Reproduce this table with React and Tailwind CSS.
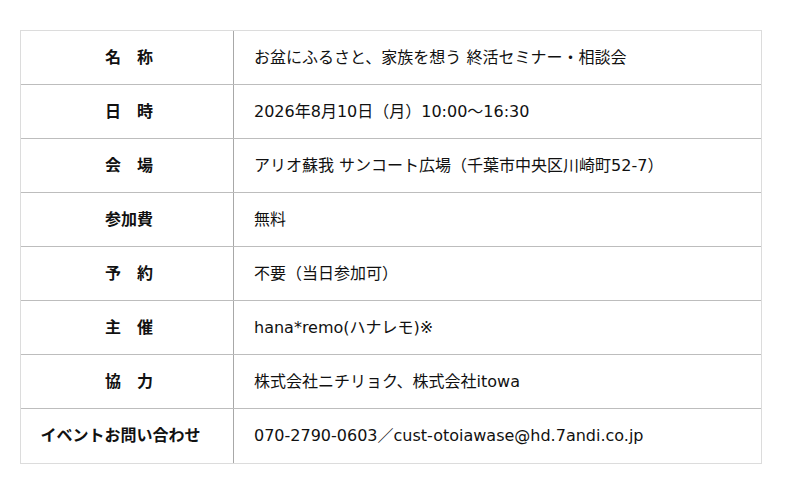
const rows = [
  ["名　称", "お盆にふるさと、家族を想う 終活セミナー・相談会"],
  ["日　時", "2026年8月10日（月）10:00〜16:30"],
  ["会　場", "アリオ蘇我 サンコート広場（千葉市中央区川崎町52-7）"],
  ["参加費", "無料"],
  ["予　約", "不要（当日参加可）"],
  ["主　催", "hana*remo(ハナレモ)※"],
  ["協　力", "株式会社ニチリョク、株式会社itowa"],
  ["イベントお問い合わせ", "070-2790-0603／cust-otoiawase@hd.7andi.co.jp"],
];

const App = () => {
  return (
    <div
      className="bg-white min-h-screen pt-[30px] px-[20px] text-[#111]"
      style={{ fontFamily: '"DejaVu Sans", "Noto Sans CJK JP", sans-serif' }}
    >
      <div className="w-[742px] border border-[#dcdcdc]">
        {rows.map(([label, value], i) => (
          <div
            key={label}
            className={`flex h-[54px] ${i < rows.length - 1 ? "border-b border-[#bdbdbd]" : ""}`}
          >
            <div
              className={`w-[213px] shrink-0 flex items-center justify-center border-r border-[#a8a8a8] text-[16px] font-bold whitespace-pre ${
                label.length > 3 ? "pr-[13px]" : "pl-[4px]"
              }`}
            >
              {label}
            </div>
            <div className="flex-1 flex items-center pl-[20px] text-[16px]">{value}</div>
          </div>
        ))}
      </div>
    </div>
  );
};

export default App;
